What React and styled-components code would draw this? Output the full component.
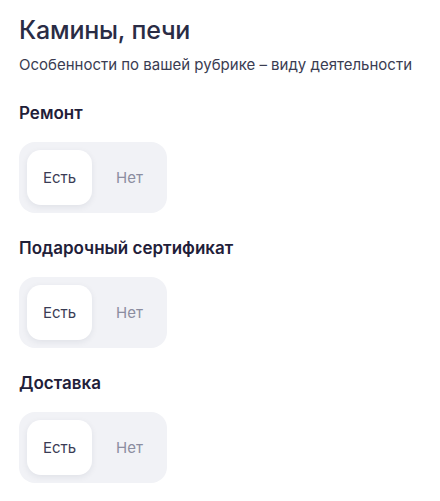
import React, { useState } from 'react'
import styled, { createGlobalStyle } from 'styled-components'

const GlobalStyle = createGlobalStyle`
    body {
        margin: 0;
        background: #ffffff;
        font-family: Inter, "Noto Sans", sans-serif;
    }
`;

const Page = styled.div`
    padding: 14px 19px 0;
`;

const Title = styled.h1`
    margin: 0;
    font-size: 25px;
    line-height: 32px;
    font-weight: 500;
    color: #2a2c45;
    letter-spacing: -0.2px;
`;

const Subtitle = styled.p`
    margin: 8px 0 0;
    font-size: 15px;
    line-height: 22px;
    color: #3a3c52;
`;

const Section = styled.div`
    margin-top: ${({ $first }) => ($first ? '26px' : '24px')};
`;

const Label = styled.div`
    font-size: 17px;
    line-height: 22px;
    font-weight: 600;
    color: #1f2039;
`;

const Toggle = styled.div`
    margin-top: 18px;
    display: flex;
    width: max-content;
    gap: 2px;
    padding: 8px;
    background: #f1f2f6;
    border-radius: 16px;
`;

const Option = styled.button`
    width: 65px;
    height: 55px;
    padding: 0 0 0 ${({ $shift }) => $shift || 0}px;
    border: 0;
    border-radius: 14px;
    font-family: inherit;
    font-size: 15px;
    cursor: pointer;
    background: ${({ $active }) => ($active ? '#ffffff' : 'transparent')};
    color: ${({ $active }) => ($active ? '#3a3c55' : '#8b8da0')};
    box-shadow: ${({ $active }) => ($active ? '0 2px 6px rgba(30, 32, 60, 0.08)' : 'none')};
`;

const features = ['Ремонт', 'Подарочный сертификат', 'Доставка'];

function Feature({ name, first }) {
    const [value, setValue] = useState(true);
    return (
        <Section $first={first}>
            <Label>{name}</Label>
            <Toggle>
                <Option $active={value} onClick={() => setValue(true)}>Есть</Option>
                <Option $active={!value} $shift={6} onClick={() => setValue(false)}>Нет</Option>
            </Toggle>
        </Section>
    );
}

export default function App() {
    return (
        <>
            <GlobalStyle />
            <Page>
                <Title>Камины, печи</Title>
                <Subtitle>Особенности по вашей рубрике – виду деятельности</Subtitle>
                {features.map((f, i) => (
                    <Feature key={f} name={f} first={i === 0} />
                ))}
            </Page>
        </>
    );
}
